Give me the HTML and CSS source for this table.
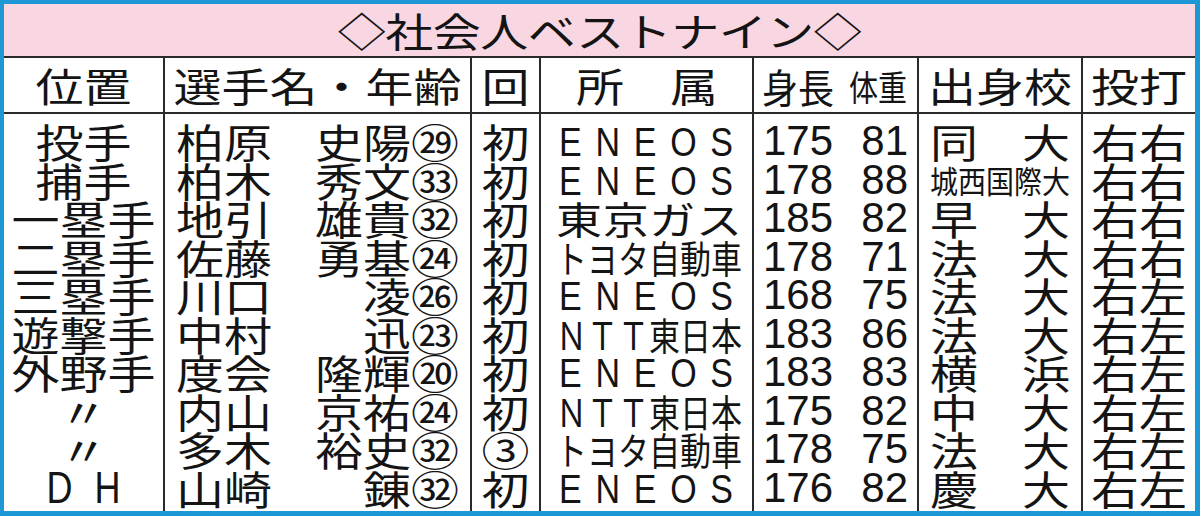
FILE: index.html
```html
<!DOCTYPE html>
<html lang="ja">
<head>
<meta charset="utf-8">
<title>社会人ベストナイン</title>
<link rel="stylesheet" href="styles.css">
</head>
<body>
<div class="frame">
  <div class="sheet">
    <div class="title"><span class="tx tt">◇社会人ベストナイン◇</span></div>
    <div class="table">
      <div class="c h"><span class="tx">位置</span></div>
      <div class="c h"><span class="tx">選手名・年齢</span></div>
      <div class="c h"><span class="tx">回</span></div>
      <div class="c h"><span class="tx spm">所　属</span></div>
      <div class="c h hw"><span class="tx s36">身長</span><span class="tx s29">体重</span></div>
      <div class="c h"><span class="tx">出身校</span></div>
      <div class="c h"><span class="tx">投打</span></div>

      <div class="c r1"><span class="tx">投手</span></div>
      <div class="c r1 name"><span class="tx">柏原</span><span class="tx">史陽㉙</span></div>
      <div class="c r1"><span class="tx">初</span></div>
      <div class="c r1 aff"><span class="tx lat j eneos">E N E O S</span></div>
      <div class="c r1 num"><span>175</span><span>81</span></div>
      <div class="c r1 sch"><span class="tx">同</span><span class="tx">大</span></div>
      <div class="c r1"><span class="tx">右右</span></div>

      <div class="c"><span class="tx">捕手</span></div>
      <div class="c name"><span class="tx">柏木</span><span class="tx">秀文㉝</span></div>
      <div class="c"><span class="tx">初</span></div>
      <div class="c aff"><span class="tx lat j eneos">E N E O S</span></div>
      <div class="c num"><span>178</span><span>88</span></div>
      <div class="c sch one"><span class="tx k5">城西国際大</span></div>
      <div class="c"><span class="tx">右右</span></div>

      <div class="c"><span class="tx">一塁手</span></div>
      <div class="c name"><span class="tx">地引</span><span class="tx">雄貴㉜</span></div>
      <div class="c"><span class="tx">初</span></div>
      <div class="c aff"><span class="tx j k4">東京ガス</span></div>
      <div class="c num"><span>185</span><span>82</span></div>
      <div class="c sch"><span class="tx">早</span><span class="tx">大</span></div>
      <div class="c"><span class="tx">右右</span></div>

      <div class="c"><span class="tx">二塁手</span></div>
      <div class="c name"><span class="tx">佐藤</span><span class="tx">勇基㉔</span></div>
      <div class="c"><span class="tx">初</span></div>
      <div class="c aff"><span class="tx j k6">トヨタ自動車</span></div>
      <div class="c num"><span>178</span><span>71</span></div>
      <div class="c sch"><span class="tx">法</span><span class="tx">大</span></div>
      <div class="c"><span class="tx">右右</span></div>

      <div class="c"><span class="tx">三塁手</span></div>
      <div class="c name"><span class="tx">川口</span><span class="tx">凌㉖</span></div>
      <div class="c"><span class="tx">初</span></div>
      <div class="c aff"><span class="tx lat j eneos">E N E O S</span></div>
      <div class="c num"><span>168</span><span>75</span></div>
      <div class="c sch"><span class="tx">法</span><span class="tx">大</span></div>
      <div class="c"><span class="tx">右左</span></div>

      <div class="c"><span class="tx">遊撃手</span></div>
      <div class="c name"><span class="tx">中村</span><span class="tx">迅㉓</span></div>
      <div class="c"><span class="tx">初</span></div>
      <div class="c aff"><span class="tx j k6">ＮＴＴ東日本</span></div>
      <div class="c num"><span>183</span><span>86</span></div>
      <div class="c sch"><span class="tx">法</span><span class="tx">大</span></div>
      <div class="c"><span class="tx">右左</span></div>

      <div class="c"><span class="tx">外野手</span></div>
      <div class="c name"><span class="tx">度会</span><span class="tx">隆輝⑳</span></div>
      <div class="c"><span class="tx">初</span></div>
      <div class="c aff"><span class="tx lat j eneos">E N E O S</span></div>
      <div class="c num"><span>183</span><span>83</span></div>
      <div class="c sch"><span class="tx">横</span><span class="tx">浜</span></div>
      <div class="c"><span class="tx">右左</span></div>

      <div class="c"><span class="tx">〃</span></div>
      <div class="c name"><span class="tx">内山</span><span class="tx">京祐㉔</span></div>
      <div class="c"><span class="tx">初</span></div>
      <div class="c aff"><span class="tx j k6">ＮＴＴ東日本</span></div>
      <div class="c num"><span>175</span><span>82</span></div>
      <div class="c sch"><span class="tx">中</span><span class="tx">大</span></div>
      <div class="c"><span class="tx">右左</span></div>

      <div class="c"><span class="tx">〃</span></div>
      <div class="c name"><span class="tx">多木</span><span class="tx">裕史㉜</span></div>
      <div class="c"><span class="tx">③</span></div>
      <div class="c aff"><span class="tx j k6">トヨタ自動車</span></div>
      <div class="c num"><span>178</span><span>75</span></div>
      <div class="c sch"><span class="tx">法</span><span class="tx">大</span></div>
      <div class="c"><span class="tx">右左</span></div>

      <div class="c r10"><span class="tx lat dh">D H</span></div>
      <div class="c r10 name"><span class="tx">山崎</span><span class="tx">錬㉜</span></div>
      <div class="c r10"><span class="tx">初</span></div>
      <div class="c r10 aff"><span class="tx lat j eneos">E N E O S</span></div>
      <div class="c r10 num"><span>176</span><span>82</span></div>
      <div class="c r10 sch"><span class="tx">慶</span><span class="tx">大</span></div>
      <div class="c r10"><span class="tx">右左</span></div>
    </div>
  </div>
</div>
</body>
</html>
```
FILE: styles.css
```css
html, body {
  margin: 0;
  padding: 0;
}
body {
  width: 1200px;
  height: 516px;
  overflow: hidden;
  font-family: "Noto Sans CJK JP", "Noto Sans", sans-serif;
  color: #141414;
}
.frame {
  box-sizing: border-box;
  width: 1200px;
  height: 516px;
  background: #1e97d5;
  padding: 4px 5px 5px 4px;
}
.sheet {
  background: #ffffff;
  height: 507px;
  display: flex;
  flex-direction: column;
}
.title {
  box-sizing: border-box;
  height: 54px;
  flex: none;
  background: #f8d6e2;
  border-bottom: 2px solid #2a2a2a;
  display: flex;
  align-items: center;
  justify-content: center;
  font-size: 48px;
}
.tt {
  letter-spacing: -0.5px;
}
.table {
  flex: 1;
  display: grid;
  grid-template-columns: 161px 307px 69px 213px 165px 164px 112px;
  grid-template-rows: 56px 46.5px repeat(8, 38.5px) 42.5px;
}
.c {
  box-sizing: border-box;
  display: flex;
  align-items: center;
  justify-content: center;
  border-right: 2px solid #2a2a2a;
  font-size: 48px;
  min-width: 0;
}
.c:nth-child(7n) {
  border-right: none;
}
.h {
  border-bottom: 2px solid #2a2a2a;
}
.r1 {
  padding-top: 8px;
}
.r10 {
  padding-bottom: 4px;
}
.tx {
  display: inline-block;
  line-height: 36px;
  white-space: nowrap;
  transform: scaleY(0.82);
}
.spm {
  letter-spacing: -1px;
}
.hw {
  justify-content: space-between;
  padding-left: 8px;
  padding-right: 10px;
}
.s36 {
  font-size: 36px;
  line-height: 30px;
  transform: scaleY(1.1);
}
.s29 {
  font-size: 29px;
  line-height: 26px;
  transform: scaleY(1.22);
}
.name {
  justify-content: space-between;
  padding-left: 11px;
  padding-right: 11px;
}
.aff {
  padding-left: 15px;
  padding-right: 10px;
}
.j {
  flex: 1;
  min-width: 0;
  text-align: justify;
  text-align-last: justify;
}
.k4 {
  font-size: 46px;
}
.k6 {
  font-size: 31px;
  line-height: 28px;
  transform: scaleY(1.22);
}
.k5 {
  font-size: 28px;
  line-height: 28px;
  transform: scaleY(1.1);
}
.lat {
  font-family: "Liberation Sans", Arial, sans-serif;
  font-size: 34px;
  line-height: 28px;
  transform: scaleY(1.22);
}
.eneos {
  margin-left: 3px;
  margin-right: 9px;
}
.dh {
  font-size: 36px;
  word-spacing: 12px;
}
.num {
  justify-content: space-between;
  padding-left: 9px;
  padding-right: 9px;
  font-family: "Liberation Sans", Arial, sans-serif;
  font-size: 42px;
}
.num span {
  line-height: 32px;
}
.sch {
  justify-content: space-between;
  padding-left: 11px;
  padding-right: 11px;
}
.sch.one {
  justify-content: center;
}
```
